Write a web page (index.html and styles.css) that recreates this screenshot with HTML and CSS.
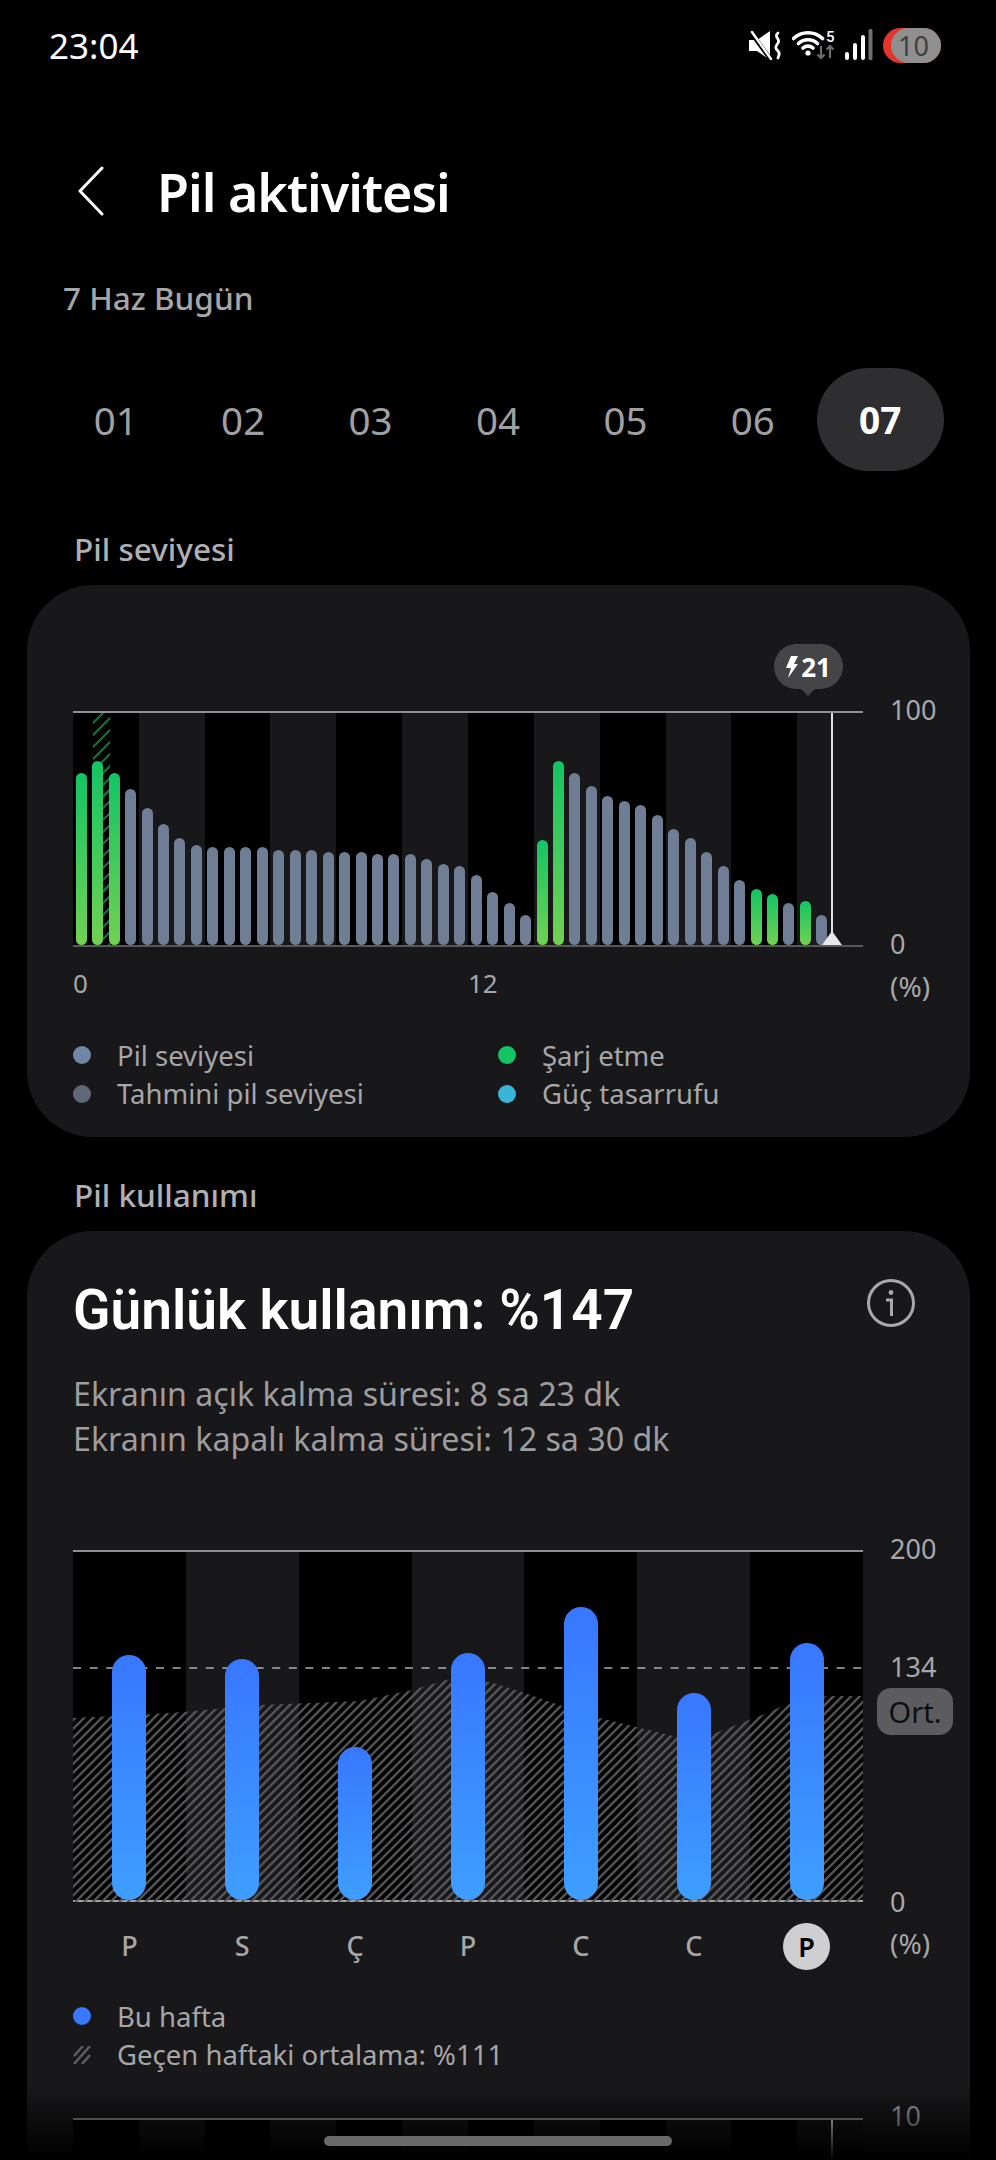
FILE: index.html
```html
<!DOCTYPE html>
<html lang="tr">
<head>
  <meta charset="UTF-8">
  <title>Pil aktivitesi</title>
  <link rel="stylesheet" href="styles.css">
</head>
<body>
  <div class="page">
    <div class="status-bar">
      <span class="clock">23:04</span>
      <div class="status-icons">
        <svg class="ic-mute" width="33" height="29" viewBox="0 0 33 29">
          <path d="M0 9h8L21 0v29L8 20H0z" fill="#fff"/>
          <path d="M1 0l21 29" stroke="#000" stroke-width="4.5"/>
          <path d="M3 1l19 27" stroke="#fff" stroke-width="2.5" stroke-linecap="round"/>
          <path d="M29 2c-5 4 3 6 0 10s-3 5 0 8 0 5 0 7" fill="none" stroke="#fff" stroke-width="2.8" stroke-linecap="round"/>
        </svg>
        <svg class="ic-wifi" width="44" height="40" viewBox="0 -5 44 40">
          <g fill="none" stroke="#fff" stroke-width="3.6" stroke-linecap="round">
            <path d="M1.5 8.5A21 21 0 0 1 30.5 8.5"/>
            <path d="M6.5 13.5A14 14 0 0 1 25.5 13.5"/>
            <path d="M11 18A7.5 7.5 0 0 1 21 18"/>
          </g>
          <circle cx="16" cy="23" r="2.6" fill="#fff"/>
          <text x="34" y="11.5" class="wifi-five">5</text>
          <path d="M29 16v12m-3.5-3.5 3.5 3.5 3.5-3.5M38 28V16m-3.5 3.5L38 16l3.5 3.5" fill="none" stroke="#6c6c6c" stroke-width="2.2"/>
        </svg>
        <svg class="ic-signal" width="28" height="32" viewBox="0 0 28 32">
          <rect x="0" y="23" width="4" height="8" rx="2" fill="#fff"/>
          <rect x="8" y="14" width="4" height="17" rx="2" fill="#fff"/>
          <rect x="16" y="6" width="4" height="25" rx="2" fill="#fff"/>
          <rect x="23.5" y="0" width="4" height="31" rx="1.5" fill="#6e6e6e"/>
        </svg>
        <div class="battery"><div class="battery-fill">10</div></div>
      </div>
    </div>

    <div class="app-header">
      <svg class="back" width="28" height="50" viewBox="0 0 28 50">
        <path d="M25 2 3 25l22 23" fill="none" stroke="#fff" stroke-width="3" stroke-linecap="round" stroke-linejoin="round"/>
      </svg>
      <h1>Pil aktivitesi</h1>
    </div>

    <div class="today">7 Haz Bugün</div>

    <div class="days">
      <div class="day">01</div>
      <div class="day">02</div>
      <div class="day">03</div>
      <div class="day">04</div>
      <div class="day">05</div>
      <div class="day">06</div>
      <div class="day active">07</div>
    </div>

    <h2 class="section-title">Pil seviyesi</h2>

    <section class="card level-card">
      <div class="chart-row">
        <div class="chart level-chart">
          <div class="charge-hatch"></div>
          <div class="level-bars">
            <div class="lbar green" style="height:172px"></div>
            <div class="lbar green" style="height:184px"></div>
            <div class="lbar green" style="height:172px"></div>
            <div class="lbar" style="height:156px"></div>
            <div class="lbar" style="height:137px"></div>
            <div class="lbar" style="height:121px"></div>
            <div class="lbar" style="height:107px"></div>
            <div class="lbar" style="height:100px"></div>
            <div class="lbar" style="height:98px"></div>
            <div class="lbar" style="height:98px"></div>
            <div class="lbar" style="height:98px"></div>
            <div class="lbar" style="height:98px"></div>
            <div class="lbar" style="height:95px"></div>
            <div class="lbar" style="height:95px"></div>
            <div class="lbar" style="height:95px"></div>
            <div class="lbar" style="height:93px"></div>
            <div class="lbar" style="height:93px"></div>
            <div class="lbar" style="height:93px"></div>
            <div class="lbar" style="height:91px"></div>
            <div class="lbar" style="height:91px"></div>
            <div class="lbar" style="height:91px"></div>
            <div class="lbar" style="height:86px"></div>
            <div class="lbar" style="height:81px"></div>
            <div class="lbar" style="height:79px"></div>
            <div class="lbar" style="height:70px"></div>
            <div class="lbar" style="height:53px"></div>
            <div class="lbar" style="height:42px"></div>
            <div class="lbar" style="height:30px"></div>
            <div class="lbar green" style="height:105px"></div>
            <div class="lbar green" style="height:184px"></div>
            <div class="lbar" style="height:172px"></div>
            <div class="lbar" style="height:159px"></div>
            <div class="lbar" style="height:149px"></div>
            <div class="lbar" style="height:144px"></div>
            <div class="lbar" style="height:140px"></div>
            <div class="lbar" style="height:130px"></div>
            <div class="lbar" style="height:116px"></div>
            <div class="lbar" style="height:107px"></div>
            <div class="lbar" style="height:93px"></div>
            <div class="lbar" style="height:79px"></div>
            <div class="lbar" style="height:65px"></div>
            <div class="lbar green" style="height:56px"></div>
            <div class="lbar green" style="height:51px"></div>
            <div class="lbar" style="height:42px"></div>
            <div class="lbar green" style="height:44px"></div>
            <div class="lbar" style="height:30px"></div>
          </div>
          <div class="now-line"></div>
          <div class="now-marker"></div>
          <div class="charge-tip">
            <svg width="12" height="22" viewBox="0 0 12 22"><path d="M5 0h7L8 8h4L2 22l3-10H0z" fill="#fff"/></svg>
            <span>21</span>
          </div>
        </div>
        <div class="axis">
          <span>100</span>
          <span>0</span>
        </div>
      </div>
      <div class="under-chart">
        <div class="hours">
          <span>0</span>
          <span>12</span>
        </div>
        <span class="unit">(%)</span>
      </div>
      <div class="legend-grid">
        <div class="legend-item"><i class="dot dot-level"></i>Pil seviyesi</div>
        <div class="legend-item"><i class="dot dot-charge"></i>Şarj etme</div>
        <div class="legend-item"><i class="dot dot-estimate"></i>Tahmini pil seviyesi</div>
        <div class="legend-item"><i class="dot dot-saver"></i>Güç tasarrufu</div>
      </div>
    </section>

    <h2 class="section-title second">Pil kullanımı</h2>

    <section class="card usage-card">
      <div class="usage-head">
        <div class="usage-title">Günlük kullanım: %147</div>
        <svg class="info" width="50" height="50" viewBox="0 0 50 50">
          <circle cx="25" cy="25" r="22.5" fill="none" stroke="#a9a9ab" stroke-width="3"/>
          <circle cx="25" cy="14.5" r="2.4" fill="#a9a9ab"/>
          <path d="M20 22h5.5v16" fill="none" stroke="#a9a9ab" stroke-width="3"/>
        </svg>
      </div>
      <p class="usage-times">Ekranın açık kalma süresi: 8 sa 23 dk<br>Ekranın kapalı kalma süresi: 12 sa 30 dk</p>

      <div class="chart-row week-row">
        <div class="chart week-chart">
          <svg class="week-bg" width="790" height="350" viewBox="0 0 790 350">
            <defs>
              <pattern id="hatch" width="6.2" height="6.2" patternUnits="userSpaceOnUse" patternTransform="rotate(45)">
                <rect width="2.3" height="6.2" fill="#58585a"/>
              </pattern>
            </defs>
            <polygon fill="url(#hatch)" points="0,166 80,162 110,160 187,153 287,149 339,138 377,127 417,130 452,141 489,154 527,166 600,184 640,182 694,161 714,152 754,144 790,144 790,350 0,350"/>
            <line x1="0" y1="116" x2="790" y2="116" stroke="#adadad" stroke-width="1.6" stroke-dasharray="8 8.6"/>
          </svg>
          <div class="week-bars">
            <div class="wbar" style="height:245px"></div>
            <div class="wbar" style="height:241px"></div>
            <div class="wbar" style="height:153px"></div>
            <div class="wbar" style="height:247px"></div>
            <div class="wbar" style="height:293px"></div>
            <div class="wbar" style="height:207px"></div>
            <div class="wbar" style="height:257px"></div>
          </div>
        </div>
        <div class="axis">
          <span>200</span>
          <span class="axis-avg">134</span>
          <span class="avg-badge">Ort.</span>
          <span>0</span>
        </div>
      </div>

      <div class="under-chart week-under">
        <div class="week-days">
          <span>P</span>
          <span>S</span>
          <span>Ç</span>
          <span>P</span>
          <span>C</span>
          <span>C</span>
          <span class="today-mark">P</span>
        </div>
        <span class="unit">(%)</span>
      </div>

      <div class="legend-list">
        <div class="legend-item"><i class="dot dot-week"></i>Bu hafta</div>
        <div class="legend-item">
          <svg class="hatch-key" width="18" height="18" viewBox="0 0 18 18">
            <path d="M1 10 10 0M1 18 17 0M9 18l8-9" stroke="#5e5e60" stroke-width="2.4" fill="none"/>
          </svg>
          Geçen haftaki ortalama: %111
        </div>
      </div>

      <div class="chart-row hourly-row">
        <div class="chart hourly-chart">
          <div class="now-line"></div>
        </div>
        <div class="axis">
          <span>10</span>
        </div>
      </div>
    </section>
  </div>

  <div class="bottom-fade"></div>
  <div class="home-bar"></div>
</body>
</html>
```

FILE: styles.css
```css
html, body {
  margin: 0;
  height: 2160px;
  overflow: hidden;
  background: #000;
}

body {
  position: relative;
  font-family: "Noto Sans", "Roboto", sans-serif;
  color: #a6a6a8;
}

/* status bar */
.status-bar {
  height: 90px;
  padding: 0 55px 0 49px;
  display: flex;
  align-items: center;
  justify-content: space-between;
}

.clock {
  font-size: 35px;
  color: #fff;
}

.status-icons {
  display: flex;
  align-items: center;
}

.ic-wifi { margin-left: 10px; }
.ic-signal { margin-left: 9px; }

.wifi-five {
  font-size: 15px;
  font-weight: 500;
  fill: #fff;
  font-family: "Roboto", sans-serif;
}

.battery {
  margin-left: 10px;
  width: 58px;
  height: 35px;
  border-radius: 18px;
  background: #e5352b;
}

.battery-fill {
  margin-left: 8px;
  padding-right: 5px;
  height: 35px;
  border-radius: 18px;
  background: #8f8f8f;
  color: #3f3f42;
  font-size: 27px;
  line-height: 35px;
  text-align: center;
}

/* header */
.app-header {
  margin-top: 51px;
  height: 100px;
  padding-left: 77px;
  display: flex;
  align-items: center;
}

.back {
  margin-right: 52px;
}

h1 {
  margin: 0;
  font-size: 52px;
  font-weight: 600;
  letter-spacing: -1px;
  color: #fff;
}

.today {
  margin: 37px 0 0 63px;
  font-size: 31.5px;
  font-weight: 500;
  line-height: 40px;
}

.days {
  margin: 50px 52px 0;
  display: grid;
  grid-template-columns: repeat(7, 1fr);
  height: 103px;
  align-items: center;
}

.day {
  height: 103px;
  line-height: 104px;
  text-align: center;
  font-size: 38.5px;
  color: #a0a0a3;
}

.day.active {
  border-radius: 52px;
  background: #2e2e30;
  color: #fff;
  font-size: 37px;
  font-weight: 700;
}

.section-title {
  margin: 58px 0 16px 74px;
  font-size: 31.5px;
  font-weight: 500;
  line-height: 40px;
  color: #b0b0b2;
}

.section-title.second {
  margin-top: 38px;
}

/* cards */
.card {
  margin: 0 26px 0 27px;
  background: #18181a;
  border-radius: 66px;
  padding-left: 46px;
}

.level-card {
  height: 552px;
  padding-top: 126px;
  box-sizing: border-box;
}

.chart-row {
  display: flex;
}

.chart {
  position: relative;
  flex: 0 0 790px;
  box-sizing: border-box;
  border-top: 2px solid #909092;
  background: repeating-linear-gradient(90deg, #000 0 65.83px, transparent 65.83px 131.67px);
}

.level-chart {
  height: 236px;
  border-bottom: 2px solid #58585a;
}

.level-bars {
  position: relative;
  height: 100%;
  display: grid;
  grid-template-columns: repeat(48, 1fr);
  justify-items: center;
  align-items: end;
}

.lbar {
  width: 11px;
  border-radius: 6px;
  background: #6f7e94;
}

.lbar.green {
  background: linear-gradient(#13c465, #71d152);
}

.charge-hatch {
  position: absolute;
  left: 20px;
  top: 0;
  bottom: 0;
  width: 17px;
  background: repeating-linear-gradient(135deg, transparent 0 6.2px, #17683a 6.2px 8.4px);
}

.now-line {
  position: absolute;
  left: 758px;
  top: 0;
  bottom: 0;
  width: 2px;
  background: #e3e3e3;
}

.now-marker {
  position: absolute;
  left: 749px;
  bottom: 0;
  border-left: 10.5px solid transparent;
  border-right: 10.5px solid transparent;
  border-bottom: 14px solid #e8e8e8;
}

.charge-tip {
  position: absolute;
  left: 701px;
  top: -69px;
  width: 69px;
  height: 45px;
  border-radius: 23px;
  background: #454547;
  color: #fff;
  font-size: 26px;
  font-weight: 700;
  display: flex;
  align-items: center;
  justify-content: center;
  gap: 3px;
}

.charge-tip::after {
  content: "";
  position: absolute;
  left: 27px;
  bottom: -7px;
  border-left: 7px solid transparent;
  border-right: 7px solid transparent;
  border-top: 7px solid #454547;
}

.axis {
  position: relative;
  margin: -19px 0 -15px 27px;
  display: flex;
  flex-direction: column;
  justify-content: space-between;
  font-size: 27px;
  line-height: 36px;
  color: #a8a8aa;
}

.under-chart {
  display: flex;
}

.hours {
  flex: 0 0 790px;
  display: grid;
  grid-template-columns: 1fr 1fr;
  margin-top: 18px;
  font-size: 26px;
  line-height: 36px;
}

.unit {
  margin: 21px 0 0 27px;
  font-size: 28px;
  line-height: 36px;
}

.legend-grid {
  margin-top: 32px;
  display: grid;
  grid-template-columns: 425px 1fr;
  row-gap: 0;
}

.legend-item {
  display: flex;
  align-items: center;
  height: 38.5px;
  font-size: 27.5px;
  color: #a6a6a8;
}

.dot {
  flex: none;
  width: 18px;
  height: 18px;
  margin-right: 26px;
  border-radius: 50%;
}

.dot-level { background: #7287a8; }
.dot-estimate { background: #5f6779; }
.dot-charge { background: #13c465; }
.dot-saver { background: #39b5d8; }
.dot-week { background: #3878ff; }

/* usage card */
.usage-card {
  padding-top: 44px;
  padding-right: 54px;
  height: 1100px;
  box-sizing: border-box;
}

.usage-head {
  display: flex;
  justify-content: space-between;
  align-items: flex-start;
}

.usage-title {
  font-family: "Roboto", "Noto Sans", sans-serif;
  font-size: 55px;
  font-weight: 600;
  line-height: 70px;
  color: #fff;
}

.info {
  margin-top: 3px;
}

.usage-times {
  margin: 26px 0 0;
  font-size: 32.2px;
  line-height: 45px;
  color: #9d9d9f;
}

.week-row {
  margin-top: 89px;
}

.week-chart {
  height: 352px;
  border-bottom: 2px solid #a3a3a5;
  background: repeating-linear-gradient(90deg, #000 0 112.86px, transparent 112.86px 225.72px);
}

.week-bg {
  position: absolute;
  left: 0;
  top: 0;
}

.week-bars {
  position: relative;
  height: 100%;
  display: grid;
  grid-template-columns: repeat(7, 1fr);
  justify-items: center;
  align-items: end;
}

.wbar {
  width: 34px;
  border-radius: 17px;
  background: linear-gradient(#3877ff, #3e9eff);
}

.week-chart + .axis {
  margin-bottom: -18px;
}

.axis-avg {
  position: absolute;
  top: 118px;
}

.avg-badge {
  position: absolute;
  left: -13px;
  top: 157px;
  width: 76px;
  height: 47px;
  border-radius: 14px;
  background: #5c5c5f;
  color: #0e0e0f;
  font-size: 29px;
  line-height: 47px;
  text-align: center;
}

.week-days {
  flex: 0 0 790px;
  display: grid;
  grid-template-columns: repeat(7, 1fr);
  justify-items: center;
  margin-top: 21px;
  font-size: 27px;
  font-weight: 500;
  line-height: 45px;
}

.today-mark {
  width: 47px;
  height: 47px;
  border-radius: 50%;
  background: #cfcfd1;
  color: #000;
  font-weight: 600;
  line-height: 47px;
  text-align: center;
}

.week-under .unit {
  margin-top: 23px;
}

.legend-list {
  margin-top: 27px;
}

.hatch-key {
  flex: none;
  margin-right: 26px;
}

.hourly-row {
  margin-top: 44px;
}

.hourly-chart {
  height: 200px;
  background: repeating-linear-gradient(90deg, #000 0 65.83px, #131315 65.83px 131.67px);
}

.hourly-row .axis {
  margin: -20px 0 0 27px;
  justify-content: flex-start;
}

/* bottom scrim and gesture bar */
.bottom-fade {
  position: absolute;
  left: 0;
  right: 0;
  bottom: 0;
  height: 75px;
  background: linear-gradient(transparent, #000);
}

.home-bar {
  position: absolute;
  left: 324px;
  top: 2136px;
  width: 348px;
  height: 10px;
  border-radius: 5px;
  background: #6a6a6a;
}
```
